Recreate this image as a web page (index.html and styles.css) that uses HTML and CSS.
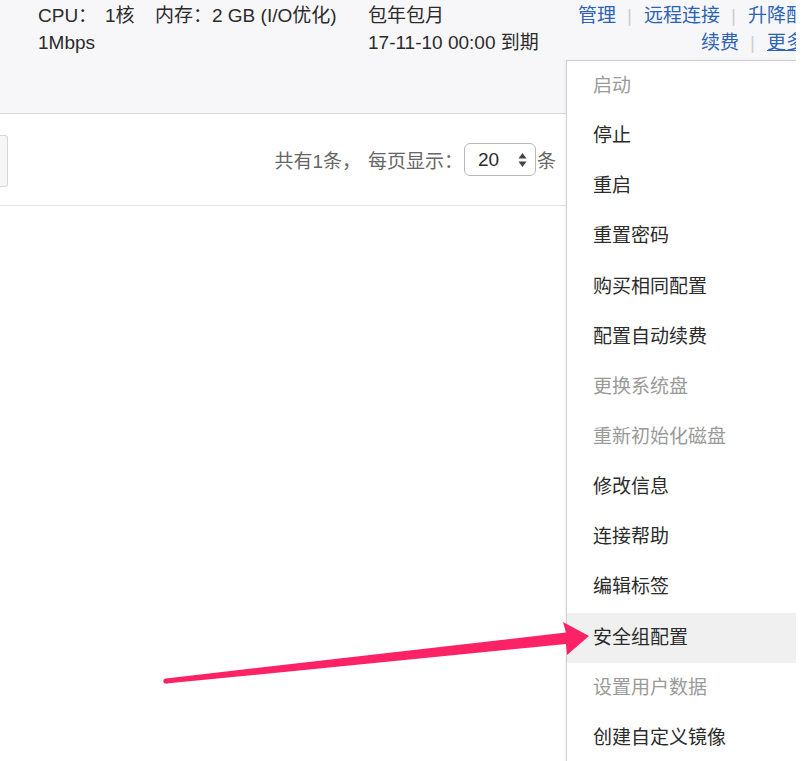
FILE: index.html
```html
<!DOCTYPE html>
<html lang="zh-CN">
<head>
<meta charset="utf-8">
<title>实例</title>
<link rel="stylesheet" href="styles.css">
</head>
<body>
<div class="viewport">
  <div class="summary">
    <div class="spec">
      <div class="row"><span class="k">CPU：</span><span class="v">1核</span><span>内存：2 GB (I/O优化)</span></div>
      <div class="row">1Mbps</div>
    </div>
    <div class="billing">
      <div class="row">包年包月</div>
      <div class="row">17-11-10 00:00 到期</div>
    </div>
    <div class="actions">
      <div class="row"><a>管理</a><i class="sep">|</i><a>远程连接</a><i class="sep">|</i><a>升降配</a></div>
      <div class="row"><a>续费</a><i class="sep">|</i><a class="more">更多</a></div>
    </div>
  </div>
  <div class="toolbar">
    <div class="stub"></div>
    <div class="pager">
      <span>共有1条，</span>
      <span class="per">每页显示：</span>
      <span class="select"><span class="num">20</span><svg class="carets" width="9" height="16" viewBox="0 0 9 16"><path d="M4.5 1 L8.5 6.5 L0.5 6.5 Z M4.5 15 L8.5 9.5 L0.5 9.5 Z" fill="#444"/></svg></span>
      <span>条</span>
    </div>
  </div>

  <ul class="menu">
    <li class="off">启动</li>
    <li>停止</li>
    <li>重启</li>
    <li>重置密码</li>
    <li>购买相同配置</li>
    <li>配置自动续费</li>
    <li class="off">更换系统盘</li>
    <li class="off">重新初始化磁盘</li>
    <li>修改信息</li>
    <li>连接帮助</li>
    <li>编辑标签</li>
    <li class="hover">安全组配置</li>
    <li class="off">设置用户数据</li>
    <li>创建自定义镜像</li>
  </ul>

  <svg class="arrow" width="796" height="761" viewBox="0 0 796 761">
    <circle cx="166" cy="681" r="2.6" fill="#fd2165"/>
    <polygon fill="#fd2165" points="166,678.4 566,632.5 563,622 589,636 567,655 566,644 166,683.6"/>
  </svg>
</div>
</body>
</html>
```

FILE: styles.css
```css
* { box-sizing: border-box; }
html, body { margin: 0; padding: 0; background: #fff; }
body {
  font-family: "Liberation Sans", "Noto Sans CJK SC", sans-serif;
  font-size: 19px;
  color: #2b2b2b;
}
.viewport {
  position: relative;
  width: 796px;
  height: 761px;
  overflow: hidden;
}
.row { height: 27px; line-height: 27px; white-space: nowrap; }

.summary {
  display: flex;
  width: 805px;
  height: 114px;
  padding: 2px 0 0 38px;
  background: #f7f7f9;
  border-bottom: 1px solid #d9d9dc;
}
.spec { width: 330px; }
.spec .k { display: inline-block; width: 67px; }
.spec .v { display: inline-block; width: 50px; }
.billing { flex: 1; }
.actions { text-align: right; }
.actions a { color: #2c63b4; text-decoration: none; }
.actions a.more { text-decoration: underline; }
.sep { font-style: normal; color: #cfcfcf; margin: 0 12px 0 11px; }

.toolbar {
  display: flex;
  align-items: center;
  height: 92px;
  border-bottom: 1px solid #e2e2e4;
}
.stub {
  width: 8px;
  height: 52px;
  background: #f6f6f6;
  border: 1px solid #d6d6d6;
  border-left: none;
  border-radius: 0 3px 3px 0;
  margin-top: 2px;
}
.pager {
  margin-left: auto;
  margin-right: 240px;
  display: flex;
  align-items: center;
  color: #666;
}
.per { margin-left: 7px; }
.select {
  display: inline-flex;
  align-items: center;
  width: 72px;
  height: 33px;
  margin: 0 1px 0 1px;
  border: 1px solid #b9b9b9;
  border-radius: 6px;
  color: #2b2b2b;
  padding-left: 13px;
}
.num { width: 40px; }
.carets { display: block; }

.menu {
  position: absolute;
  left: 566px;
  top: 60px;
  width: 260px;
  margin: 0;
  padding: 0;
  list-style: none;
  background: #fff;
  border: 1px solid #cfcfcf;
  box-shadow: 0 1px 4px rgba(0,0,0,0.08);
}
.menu li {
  height: 50.15px;
  line-height: 50px;
  padding-left: 26px;
  color: #2b2b2b;
}
.menu li.off { color: #9a9a9a; }
.menu li.hover { background: #f0f0f0; }

.arrow { position: absolute; left: 0; top: 0; pointer-events: none; }
```
